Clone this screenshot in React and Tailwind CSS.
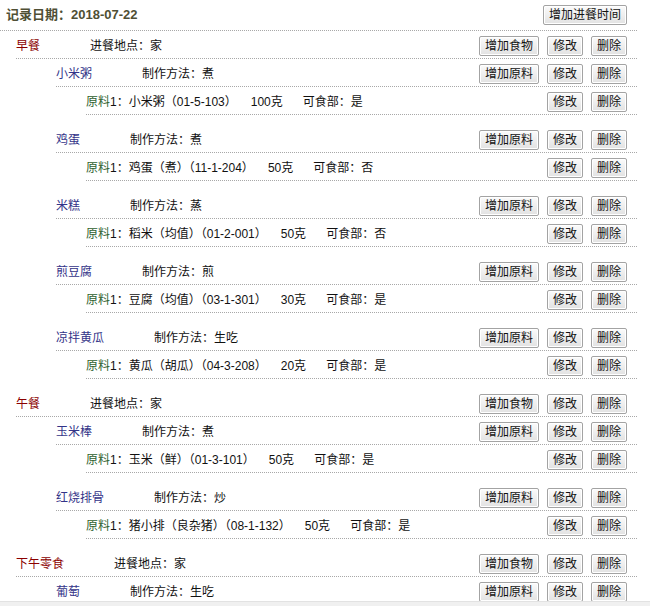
import React from "react";

const meals = [
  {
    name: "早餐",
    place: "家",
    foods: [
      { name: "小米粥", method: "煮", ings: [["小米粥（01-5-103）", "100克", "是"]] },
      { name: "鸡蛋", method: "煮", ings: [["鸡蛋（煮）（11-1-204）", "50克", "否"]] },
      { name: "米糕", method: "蒸", ings: [["稻米（均值）（01-2-001）", "50克", "否"]] },
      { name: "煎豆腐", method: "煎", ings: [["豆腐（均值）（03-1-301）", "30克", "是"]] },
      { name: "凉拌黄瓜", method: "生吃", ings: [["黄瓜（胡瓜）（04-3-208）", "20克", "是"]] },
    ],
  },
  {
    name: "午餐",
    place: "家",
    foods: [
      { name: "玉米棒", method: "煮", ings: [["玉米（鲜）（01-3-101）", "50克", "是"]] },
      { name: "红烧排骨", method: "炒", ings: [["猪小排（良杂猪）（08-1-132）", "50克", "是"]] },
    ],
  },
  {
    name: "下午零食",
    place: "家",
    foods: [{ name: "葡萄", method: "生吃", ings: [] }],
  },
];

function Btn({ children }) {
  return (
    <button className="h-[20px] px-[5px] border border-[#a3a3a3] rounded-[2px] bg-gradient-to-b from-[#fbfbfb] to-[#e2e2e2] text-[12px] leading-[18px] text-[#111] shadow-[inset_0_0_0_1px_#ffffff]">
      {children}
    </button>
  );
}

function Actions({ add }) {
  return (
    <div className="ml-auto flex items-center gap-[8px]">
      {add && <Btn>{add}</Btn>}
      <Btn>修改</Btn>
      <Btn>删除</Btn>
    </div>
  );
}

const row = "h-[28px] pt-[3px] flex items-center border-b border-dotted border-[#a8a8a8]";

export default function App() {
  return (
    <div
      className="w-[650px] h-[606px] overflow-hidden flex flex-col bg-white text-[12px] text-[#111]"
      style={{ fontFamily: '"Liberation Sans", "Noto Sans CJK SC", sans-serif' }}
    >
      <div className="flex-1 overflow-hidden mr-[13px]">
        <div className="h-[31px] flex items-center pl-[6px] pr-[10px] border-b border-dotted border-[#a8a8a8]">
          <span className="font-bold text-[13px] text-[#4f4f35]">记录日期：2018-07-22</span>
          <div className="ml-auto">
            <Btn>增加进餐时间</Btn>
          </div>
        </div>
        {meals.map((m) => (
          <div key={m.name} className="ml-[16px]">
            <div className={row + " pr-[10px]"}>
              <span className="text-[#8b0000]">{m.name}</span>
              <span className="ml-[50px]">进餐地点：{m.place}</span>
              <Actions add="增加食物" />
            </div>
            {m.foods.map((f) => (
              <div key={f.name} className="ml-[40px] mb-[10px]">
                <div className={row + " pr-[10px]"}>
                  <span className="text-[#333388]">{f.name}</span>
                  <span className="ml-[50px]">制作方法：{f.method}</span>
                  <Actions add="增加原料" />
                </div>
                {f.ings.map((ing, i) => (
                  <div key={i} className={"ml-[30px] pr-[10px] " + row}>
                    <span>
                      <span className="text-[#2f5f2f]">原料</span>
                      {i + 1}：{ing[0]}
                    </span>
                    <span className="ml-[14px]">{ing[1]}</span>
                    <span className="ml-[20px]">可食部：{ing[2]}</span>
                    <Actions />
                  </div>
                ))}
              </div>
            ))}
          </div>
        ))}
      </div>
      <div className="h-[5px] shrink-0 bg-[#f0f0f0] border-t border-[#e2e2e2]" />
    </div>
  );
}
